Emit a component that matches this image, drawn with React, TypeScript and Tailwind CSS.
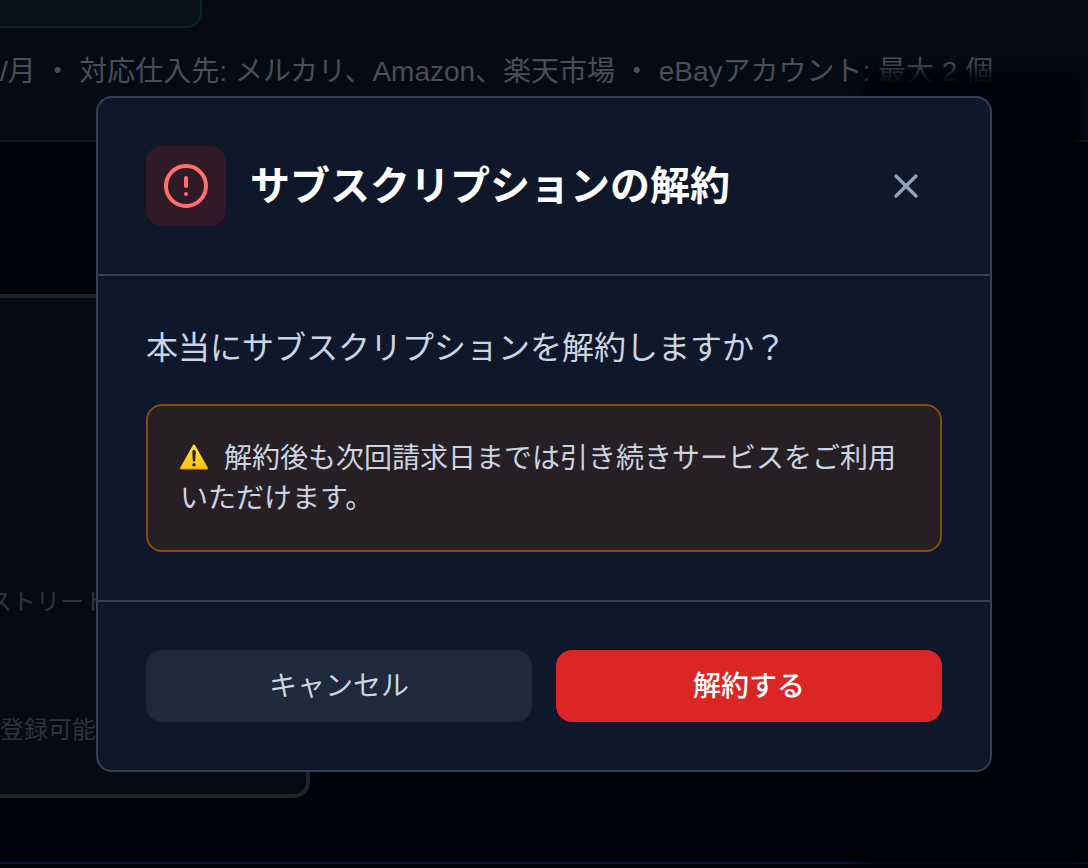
import React, { useId } from 'react';
import { AlertCircle, X } from 'lucide-react';

function WarningSign() {
  const fill = useId();

  return (
    <svg viewBox="0 0 28 26" className="mr-4 inline-block h-[26px] w-7 align-[-2px]" role="img" aria-label="警告">
      <defs>
        <linearGradient id={fill} x1="0" y1="0" x2="0" y2="1">
          <stop offset="0" stopColor="#ffe24a" />
          <stop offset="1" stopColor="#fdbf0a" />
        </linearGradient>
      </defs>
      <path
        d="M12.9 1.2a1.3 1.3 0 0 1 2.2 0l12.6 22.4c.4.8-.1 1.6-1 1.6H1.3c-.9 0-1.4-.8-1-1.6z"
        fill={`url(#${fill})`}
      />
      <path d="M.3 24.4h27.4c0 .5-.4.8-1 .8H1.3c-.6 0-1-.3-1-.8z" fill="#e0a60c" />
      <path d="M12.3 7.6c0-1.1.7-1.7 1.7-1.7s1.7.6 1.7 1.7l-.5 8.8c0 .8-.5 1.2-1.2 1.2s-1.2-.4-1.2-1.2z" fill="#2b2108" />
      <circle cx="14" cy="20.8" r="1.7" fill="#2b2108" />
    </svg>
  );
}

function PlanPage() {
  return (
    <div className="flex min-h-screen flex-col overflow-hidden bg-[#000209]">
      <header className="border-b-2 border-[#171b23] bg-[#060a14] pb-12">
        <div className="h-7 w-[202px] rounded-br-2xl border-r-2 border-b-2 border-[#09291b] bg-[#081318]" />
        <p className="mt-6 font-['Liberation_Sans','Noto_Sans_CJK_JP',sans-serif] text-[28px] leading-10 whitespace-nowrap text-[#4a4e59]">
          /月 ・ 対応仕入先: メルカリ、Amazon、楽天市場 ・ eBayアカウント: 最大 2 個
        </p>
      </header>

      <main className="pt-38 pb-16">
        <section className="-ml-4 h-126 w-[326px] rounded-2xl border-4 border-[#1f242c] bg-[#060a13] pt-72">
          <p className="text-2xl whitespace-nowrap text-[#2f333b]">ストリート</p>
          <p className="mt-24 pl-3 text-2xl whitespace-nowrap text-[#2f333b]">登録可能</p>
        </section>
      </main>

      <footer className="flex-1 border-t-2 border-[#081730] bg-[#01040f]" />
    </div>
  );
}

function CancelDialog() {
  return (
    <div className="fixed inset-0 flex items-center justify-center overflow-hidden p-4">
      <div className="absolute top-18 right-2 bottom-0 w-54 bg-[#000209] blur-[8px]" />
      <div
        role="dialog"
        aria-modal="true"
        aria-labelledby="cancel-title"
        className="relative w-full max-w-4xl rounded-2xl border-2 border-[#334155] bg-[#0f172a]"
      >
        <div className="flex items-center justify-between border-b-2 border-[#334155] p-12">
          <div className="flex items-center gap-6">
            <div className="rounded-2xl bg-[#311a27] p-4">
              <AlertCircle className="size-12 text-[#ff6f70]" />
            </div>
            <h2 id="cancel-title" className="text-[40px] leading-14 font-bold text-white">
              サブスクリプションの解約
            </h2>
          </div>
          <button type="button" aria-label="閉じる" className="rounded-2xl p-4 text-[#94a3b8]">
            <X className="size-10" />
          </button>
        </div>

        <div className="p-12">
          <p className="text-[32px] leading-12 text-[#cbd5e1]">本当にサブスクリプションを解約しますか？</p>
          <div className="mt-8 rounded-2xl border-2 border-[#854d0e] bg-[#261f24] p-8">
            <p className="text-[28px] leading-10 text-[#cbd5e1]">
              <WarningSign />
              解約後も次回請求日までは引き続きサービスをご利用いただけます。
            </p>
          </div>
        </div>

        <div className="flex gap-6 border-t-2 border-[#334155] p-12">
          <button
            type="button"
            className="flex-1 rounded-2xl bg-[#1e293b] py-4 text-[28px] leading-10 text-[#cbd5e1]"
          >
            キャンセル
          </button>
          <button
            type="button"
            className="flex-1 rounded-2xl bg-[#dc2626] py-4 text-[28px] leading-10 font-medium text-white"
          >
            解約する
          </button>
        </div>
      </div>
    </div>
  );
}

export default function App() {
  return (
    <div lang="ja" className="font-['Inter','Noto_Sans_CJK_JP',sans-serif]">
      <PlanPage />
      <CancelDialog />
    </div>
  );
}
